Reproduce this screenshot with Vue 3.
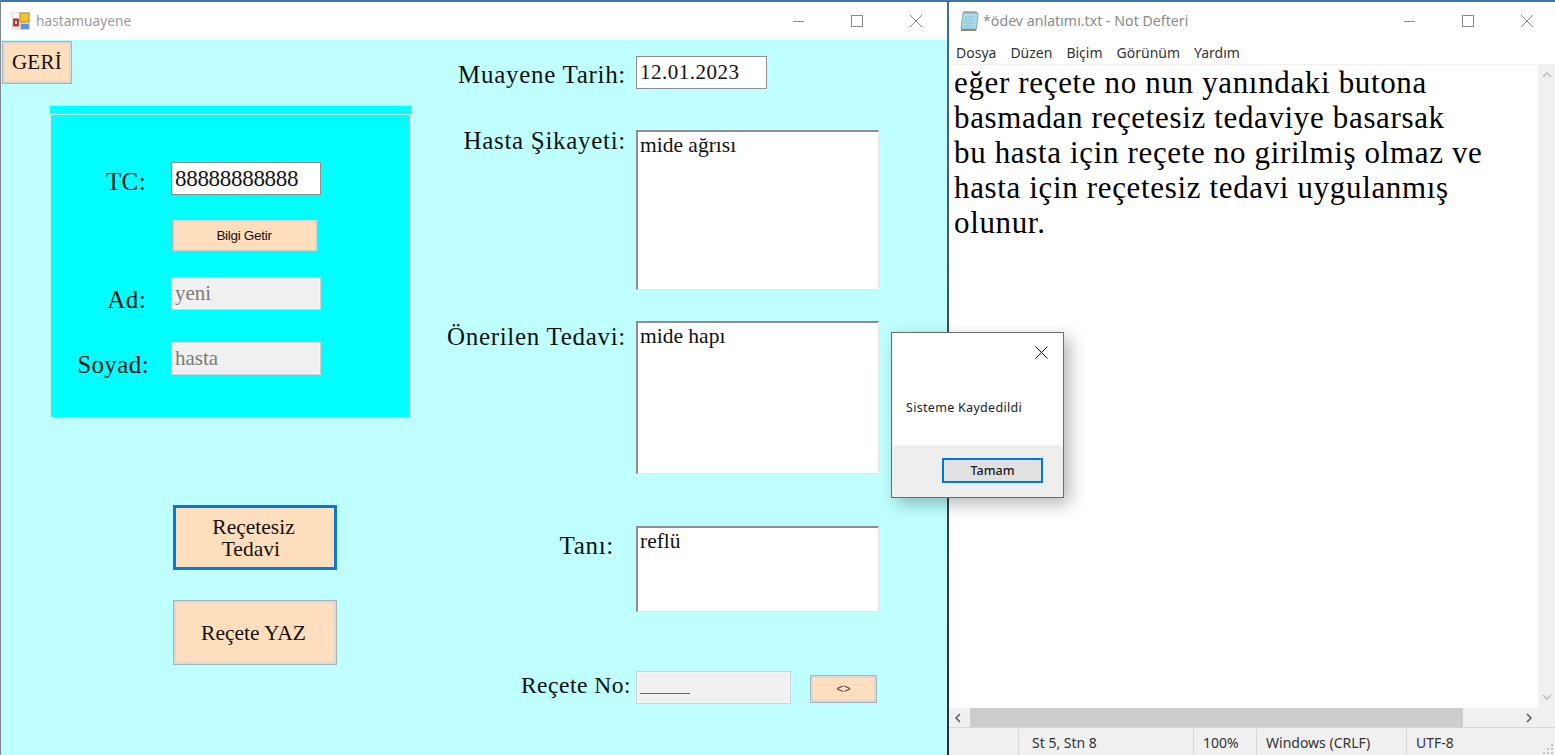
<template>
  <div class="desktop">
    <!-- form window -->
    <section class="window form-window">
      <header class="titlebar">
        <svg class="app-icon" width="18" height="18" viewBox="0 0 18 18">
          <rect x="0" y="0" width="18" height="18" fill="#dedede" />
          <rect x="1" y="1" width="6" height="5" fill="#fff" />
          <rect x="8" y="1" width="9" height="9" fill="#f4c430" stroke="#a8821c" stroke-width="0.8" />
          <rect x="1.500" y="7" width="5" height="7" fill="#c8352c" stroke="#8e1f1a" stroke-width="0.6" />
          <rect x="3" y="9" width="2" height="3" fill="#f3d0c8" />
          <rect x="1" y="15" width="2.500" height="2.500" fill="#fff" />
          <rect x="4.500" y="15" width="2.500" height="2.500" fill="#fff" />
          <rect x="9" y="12" width="8" height="5" fill="#5b8fdc" stroke="#8fb0e0" stroke-width="0.5" />
        </svg>
        <span class="title-text">hastamuayene</span>
        <div class="controls">
          <svg class="ctl" width="14" height="14" viewBox="0 0 14 14"><path d="M2 7.500h11" stroke="#8a8a8a" fill="none" /></svg>
          <svg class="ctl" width="14" height="14" viewBox="0 0 14 14"><rect x="1.500" y="1.500" width="11" height="11" stroke="#8a8a8a" fill="none" /></svg>
          <svg class="ctl" width="14" height="14" viewBox="0 0 14 14"><path d="M1 1l12 12M13 1L1 13" stroke="#8a8a8a" fill="none" /></svg>
        </div>
      </header>

      <div class="form-body">
        <div class="left-col">
          <button class="win-btn back-btn">GERİ</button>
          <div class="panel-strip"></div>
          <div class="panel">
            <label class="field-label short tc-label">TC:</label>
            <div class="win-input tc-input">88888888888</div>
            <span></span>
            <button class="win-btn fetch-btn">Bilgi Getir</button>
            <label class="field-label short">Ad:</label>
            <div class="win-input disabled small-text">yeni</div>
            <label class="field-label">Soyad:</label>
            <div class="win-input disabled small-text">hasta</div>
          </div>
          <button class="win-btn action-btn focused">Reçetesiz<br />Tedavi&nbsp;</button>
          <button class="win-btn action-btn second">Reçete YAZ</button>
        </div>

        <div class="right-col">
          <div class="row date-row">
            <label class="field-label">Muayene Tarih:</label>
            <div class="win-input date-input">12.01.2023</div>
          </div>
          <div class="row area-row complaint">
            <label class="field-label">Hasta Şikayeti:</label>
            <div class="text-area">mide ağrısı</div>
          </div>
          <div class="row area-row treatment">
            <label class="field-label">Önerilen Tedavi:</label>
            <div class="text-area">mide hapı</div>
          </div>
          <div class="row area-row diagnosis">
            <label class="field-label">Tanı:</label>
            <div class="text-area">reflü</div>
          </div>
          <div class="row recipe-row">
            <label class="field-label">Reçete No:</label>
            <div class="win-input disabled recipe-input"><span class="blank"></span></div>
            <button class="win-btn small-btn">&lt;&gt;</button>
          </div>
        </div>
      </div>
    </section>

    <!-- notepad -->
    <section class="window notepad">
      <header class="titlebar">
        <svg class="note-icon" width="20" height="22" viewBox="0 0 20 22">
          <path d="M4 3h15l-1.500 16H2z" fill="#a9dbe9" stroke="#84a9b6" />
          <path d="M2 19h15.500l-.5 2H2z" fill="#8f8a70" />
          <path d="M6 7h10M5.500 10h10M5 13h10M4.500 16h10" stroke="#8cc4d8" />
          <path d="M5 3V1M7 3V1M9 3V1M11 3V1M13 3V1M15 3V1M17 3V1" stroke="#777" />
        </svg>
        <span class="title-text note-title">*ödev anlatımı.txt - Not Defteri</span>
        <div class="controls note-controls">
          <svg class="ctl" width="14" height="14" viewBox="0 0 14 14"><path d="M2 7.500h11" stroke="#8a8a8a" fill="none" /></svg>
          <svg class="ctl" width="14" height="14" viewBox="0 0 14 14"><rect x="1.500" y="1.500" width="11" height="11" stroke="#8a8a8a" fill="none" /></svg>
          <svg class="ctl" width="14" height="14" viewBox="0 0 14 14"><path d="M1 1l12 12M13 1L1 13" stroke="#8a8a8a" fill="none" /></svg>
        </div>
      </header>
      <nav class="menu">
        <span v-for="item in menuItems" :key="item">{{ item }}</span>
      </nav>
      <div class="note-main">
        <div class="note-text">
          <div v-for="line in noteLines" :key="line">{{ line }}</div>
        </div>
        <div class="v-scroll">
          <svg width="10" height="6" viewBox="0 0 10 6"><path d="M1 5l4-4 4 4" stroke="#b8b8b8" stroke-width="1.300" fill="none" /></svg>
          <svg width="10" height="6" viewBox="0 0 10 6"><path d="M1 1l4 4 4-4" stroke="#b8b8b8" stroke-width="1.300" fill="none" /></svg>
        </div>
      </div>
      <div class="h-scroll">
        <div class="h-bar">
          <svg class="arrow" width="6" height="10" viewBox="0 0 6 10"><path d="M5 1L1 5l4 4" stroke="#555" stroke-width="1.500" fill="none" /></svg>
          <div class="h-track"><div class="h-thumb"></div></div>
          <svg class="arrow" width="6" height="10" viewBox="0 0 6 10"><path d="M1 1l4 4-4 4" stroke="#555" stroke-width="1.500" fill="none" /></svg>
        </div>
      </div>
      <footer class="status">
        <span class="cell cell-pos">St 5, Stn 8</span>
        <span class="cell cell-zoom">100%</span>
        <span class="cell cell-eol">Windows (CRLF)</span>
        <span class="cell cell-enc">UTF-8</span>
        <svg class="grip" width="11" height="11" viewBox="0 0 11 11">
          <path d="M8 0h2v2H8zM4 4h2v2H4zM8 4h2v2H8zM0 8h2v2H0zM4 8h2v2H4zM8 8h2v2H8z" fill="#c4c4c4" />
        </svg>
      </footer>
    </section>

    <!-- message box -->
    <section class="dialog">
      <div class="dialog-top">
        <svg class="dialog-x" width="13" height="13" viewBox="0 0 13 13"><path d="M0.500 0.500l12 12M12.500 0.500l-12 12" stroke="#111" fill="none" /></svg>
        <p class="dialog-msg">Sisteme Kaydedildi</p>
      </div>
      <div class="dialog-bottom">
        <button class="ok-btn">Tamam</button>
      </div>
    </section>
  </div>
</template>

<script setup>
const menuItems = ['Dosya', 'Düzen', 'Biçim', 'Görünüm', 'Yardım']

const noteLines = [
  'eğer reçete no nun yanındaki butona',
  'basmadan reçetesiz tedaviye basarsak',
  'bu hasta için reçete no girilmiş olmaz ve',
  'hasta için reçetesiz tedavi uygulanmış',
  'olunur.',
]
</script>

<style>
html,
body {
  margin: 0;
  overflow: hidden;
}
</style>

<style scoped>
.desktop {
  position: relative;
  width: 1555px;
  height: 755px;
  overflow: hidden;
  background: linear-gradient(#3f6f96, #3a4a55 50%, #2c2c2c);
}

.window {
  position: absolute;
  top: 0;
  bottom: 0;
  display: flex;
  flex-direction: column;
  box-sizing: border-box;
  border-top: 2px solid #3f75ab;
  background: #fff;
}

.form-window {
  left: 0;
  width: 947px;
  border-left: 1px solid #7d8a92;
}

.notepad {
  left: 949px;
  right: 0;
}

.titlebar {
  display: flex;
  align-items: center;
  height: 38px;
  flex: none;
  background: #fff;
  font-family: "Noto Sans", sans-serif;
}

.app-icon {
  margin-left: 11px;
  margin-top: -1px;
}

.title-text {
  margin-left: 6px;
  margin-top: -1px;
  font-size: 13.7px;
  color: #9a9a9a;
}

.note-icon {
  margin-left: 10px;
}

.note-title {
  margin-left: 4px;
  font-size: 14.2px;
  color: #8a8a8a;
}

.controls {
  display: flex;
  gap: 45px;
  margin-left: auto;
  margin-right: 24px;
  margin-top: -1px;
}

.note-controls {
  margin-right: 21px;
}

.form-body {
  flex: 1;
  display: flex;
  background: #bfffff;
  font-family: "Liberation Serif", serif;
  color: #111;
}

.left-col {
  display: flex;
  flex-direction: column;
  align-items: flex-start;
  width: 429px;
  flex: none;
}

.win-btn {
  box-sizing: border-box;
  padding: 0;
  background: #ffdebd;
  border: 1px solid #b0b0b0;
  box-shadow: inset 0 0 0 2px #d9d9d9;
  font-family: "Liberation Serif", serif;
  color: #111;
}

.back-btn {
  width: 70px;
  height: 43px;
  margin: 1px 0 0 1px;
  font-size: 21px;
  letter-spacing: 0.3px;
}

.panel-strip {
  width: 361px;
  height: 8px;
  margin: 22px 0 0 49px;
  background: #00ffff;
}

.panel {
  display: grid;
  grid-template-columns: 98px 150px;
  grid-template-rows: 33px 33px 34px 41px;
  column-gap: 22px;
  row-gap: 24px;
  align-items: end;
  box-sizing: border-box;
  width: 361px;
  height: 304px;
  margin-left: 49px;
  padding-top: 47px;
  border: 1px solid #d4ecec;
  background: #00ffff;
}

.field-label {
  display: block;
  text-align: right;
  font-size: 25px;
  letter-spacing: 0.7px;
  white-space: nowrap;
  color: #111;
}

.panel .field-label {
  margin-bottom: -6px;
  line-height: 33px;
  letter-spacing: 0.4px;
}

.panel .short {
  margin-right: 3px;
}

.panel .tc-label {
  margin-bottom: -3px;
}

.win-input {
  box-sizing: border-box;
  width: 150px;
  height: 33px;
  padding: 2px 0 0 3px;
  background: #fff;
  border: 1px solid #8e8e8e;
  font-size: 23px;
  line-height: 27px;
  color: #111;
}

.tc-input {
  letter-spacing: -0.3px;
}

.win-input.disabled {
  background: #f0f0f0;
  border-color: #d0d0d0;
  box-shadow: inset 0 0 0 1px #f8f8f8;
  color: #7a7a7a;
}

.small-text {
  font-size: 21px;
}

.fetch-btn {
  width: 146px;
  height: 33px;
  margin-left: 1px;
  padding-right: 2px;
  font-family: "Liberation Sans", sans-serif;
  font-size: 13.5px;
  letter-spacing: -0.3px;
}

.action-btn {
  width: 164px;
  height: 65px;
  margin-left: 172px;
  padding-right: 3px;
  font-size: 21.5px;
  line-height: 22px;
}

.focused {
  margin-top: 87px;
  border: 3px solid #0b78d7;
  box-shadow: none;
}

.second {
  margin-top: 30px;
}

.right-col {
  display: flex;
  flex-direction: column;
  flex: 1;
}

.row {
  display: flex;
  align-items: flex-start;
}

.row .field-label {
  width: 196px;
  flex: none;
}

.date-row {
  margin-top: 16px;
}

.date-row .field-label {
  line-height: 37px;
}

.date-input {
  width: 131px;
  margin-left: 10px;
  font-size: 21px;
  letter-spacing: 0.5px;
}

.text-area {
  box-sizing: border-box;
  width: 243px;
  margin-left: 10px;
  padding: 1px 0 0 2px;
  background: #fff;
  border-top: 2px solid #8e8e8e;
  border-left: 2px solid #8e8e8e;
  border-right: 1px solid #e3e3e3;
  border-bottom: 1px solid #e3e3e3;
  font-size: 21.5px;
  line-height: 24px;
}

.area-row .field-label {
  line-height: 22px;
}

.complaint {
  margin-top: 37px;
}

.complaint .text-area {
  height: 160px;
}

.treatment {
  margin-top: 31px;
}

.treatment .text-area {
  height: 153px;
}

.treatment .field-label {
  margin-top: 5px;
}

.diagnosis {
  margin-top: 52px;
}

.diagnosis .text-area {
  height: 86px;
}

.diagnosis .field-label {
  width: 184px;
  margin-top: 9px;
  margin-right: 12px;
}

.recipe-row {
  margin-top: 59px;
  align-items: flex-start;
}

.recipe-row .field-label {
  width: 201px;
  font-size: 23.5px;
  letter-spacing: 0.5px;
  line-height: 29px;
}

.recipe-input {
  width: 155px;
  margin-left: 5px;
  padding: 0 0 0 3px;
}

.blank {
  display: block;
  width: 50px;
  margin-top: 21px;
  border-bottom: 1px solid #666;
}

.small-btn {
  width: 67px;
  height: 28px;
  margin-left: 19px;
  margin-top: 4px;
  font-family: "Liberation Sans", sans-serif;
  font-size: 12px;
  color: #444;
}

/* notepad parts */
.menu {
  display: flex;
  align-items: center;
  box-sizing: border-box;
  height: 25px;
  flex: none;
  padding: 1px 0 0 7px;
  border-bottom: 1px solid #f0f0f0;
  font-family: "Noto Sans", sans-serif;
  font-size: 14px;
  color: #333;
}

.menu span {
  margin-right: 14px;
}

.note-main {
  flex: 1;
  display: flex;
  min-height: 0;
}

.note-text {
  flex: 1;
  padding-left: 5px;
  font-family: "Liberation Serif", serif;
  font-size: 31px;
  line-height: 35px;
  letter-spacing: 0.65px;
  color: #000;
  white-space: nowrap;
}

.v-scroll {
  display: flex;
  flex-direction: column;
  align-items: center;
  justify-content: space-between;
  box-sizing: border-box;
  width: 17px;
  padding: 7px 0 8px;
  background: #f0f0f0;
}

.h-scroll {
  height: 19px;
  flex: none;
  padding-right: 17px;
  background: #f0f0f0;
}

.h-bar {
  display: flex;
  align-items: center;
  height: 100%;
}

.arrow {
  flex: none;
  margin: 0 6px;
}

.h-track {
  flex: 1;
  height: 19px;
  margin: 0 3px;
}

.h-thumb {
  width: 493px;
  height: 19px;
  background: #cdcdcd;
}

.status {
  position: relative;
  display: flex;
  align-items: center;
  height: 28px;
  box-sizing: border-box;
  flex: none;
  padding-top: 1px;
  border-top: 1px solid #d7d7d7;
  background: #f0f0f0;
  font-family: "Noto Sans", sans-serif;
  font-size: 14px;
  color: #333;
}

.cell {
  display: flex;
  align-items: center;
  box-sizing: border-box;
  height: 100%;
  border-left: 1px solid #d7d7d7;
}

.cell-pos {
  width: 175px;
  margin-left: 69px;
  padding-left: 13px;
}

.cell-zoom {
  width: 63px;
  padding-left: 9px;
}

.cell-eol {
  width: 150px;
  padding-left: 9px;
}

.cell-enc {
  flex: 1;
  padding-left: 9px;
}

.grip {
  position: absolute;
  right: 1px;
  bottom: 0;
}

/* message box */
.dialog {
  position: absolute;
  left: 891px;
  top: 332px;
  display: flex;
  flex-direction: column;
  box-sizing: border-box;
  width: 173px;
  height: 166px;
  border: 1px solid #6b6b6b;
  background: #fff;
  box-shadow: 6px 6px 16px rgba(0, 0, 0, 0.28);
  font-family: "Noto Sans", sans-serif;
  color: #222;
}

.dialog-top {
  position: relative;
  flex: 1;
}

.dialog-x {
  position: absolute;
  top: 13px;
  right: 15px;
}

.dialog-msg {
  margin: 67px 0 0 14px;
  font-size: 12.5px;
  line-height: 16px;
  letter-spacing: 0.3px;
}

.dialog-bottom {
  display: flex;
  justify-content: flex-end;
  box-sizing: border-box;
  height: 52px;
  padding: 13px 20px 0 0;
  background: #eeeeee;
}

.ok-btn {
  box-sizing: border-box;
  width: 101px;
  height: 25px;
  padding: 0;
  background: #e1e1e1;
  border: 2px solid #0078d7;
  font-family: "Noto Sans", sans-serif;
  font-size: 12.5px;
  font-weight: 500;
  color: #222;
}
</style>
